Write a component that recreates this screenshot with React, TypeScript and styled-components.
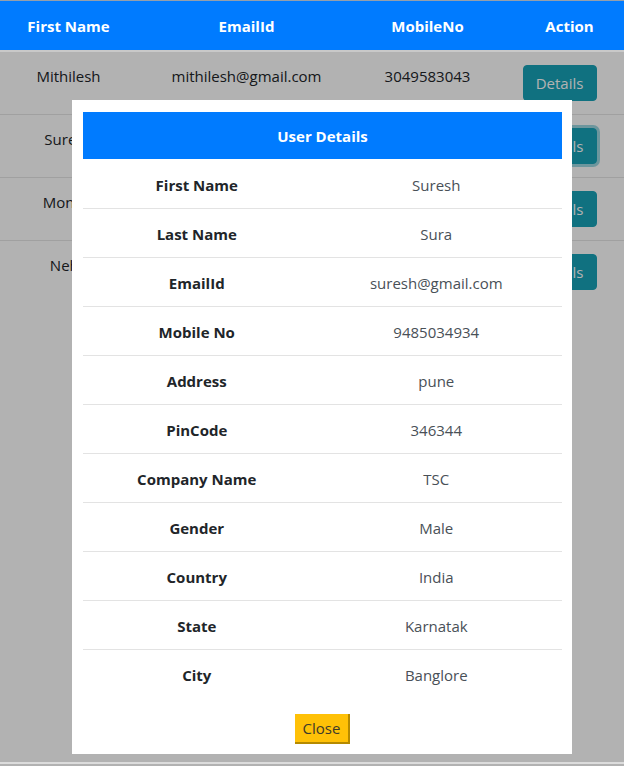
import styled, { createGlobalStyle } from "styled-components";

const users = [
  { first: "Mithilesh", email: "mithilesh@gmail.com", mobile: "3049583043" },
  { first: "Suresh", email: "suresh@gmail.com", mobile: "9485034934", focused: true },
  { first: "Monika", email: "monika@gmail.com", mobile: "8475638293" },
  { first: "Neha", email: "neha@gmail.com", mobile: "9384756473" },
];

const details: [string, string][] = [
  ["First Name", "Suresh"],
  ["Last Name", "Sura"],
  ["EmailId", "suresh@gmail.com"],
  ["Mobile No", "9485034934"],
  ["Address", "pune"],
  ["PinCode", "346344"],
  ["Company Name", "TSC"],
  ["Gender", "Male"],
  ["Country", "India"],
  ["State", "Karnatak"],
  ["City", "Banglore"],
];

const App = () => {
  return (
    <>
      <GlobalStyle />
      <Page>
        <HeadRow>
          <HeadCell>First Name</HeadCell>
          <HeadCell>EmailId</HeadCell>
          <HeadCell>MobileNo</HeadCell>
          <HeadCell $shift={16}>Action</HeadCell>
        </HeadRow>
        {users.map((u, i) => (
          <Row key={u.email} $last={i === users.length - 1}>
            <Cell>{u.first}</Cell>
            <Cell>{u.email}</Cell>
            <Cell>{u.mobile}</Cell>
            <ActionCell>
              <DetailsButton $focused={!!u.focused}>Details</DetailsButton>
            </ActionCell>
          </Row>
        ))}
        <Filler />
        <BottomRule />
      </Page>
      <Backdrop>
        <Modal>
          <ModalTitle>User Details</ModalTitle>
          {details.map(([label, value], i) => (
            <DetailRow key={label} $last={i === details.length - 1}>
              <Label>{label}</Label>
              <Value>{value}</Value>
            </DetailRow>
          ))}
          <Footer>
            <CloseButton>Close</CloseButton>
          </Footer>
        </Modal>
      </Backdrop>
    </>
  );
};

const GlobalStyle = createGlobalStyle`
  body {
    margin: 0;
    background: #fff;
    font-family: "Open Sans", "Noto Sans", sans-serif;
  }
`;

const Page = styled.div`
  display: flex;
  flex-direction: column;
  height: 766px;
  border-top: 1px solid #d6e4f5;
  box-sizing: border-box;
`;

const columns = "137px 219px 143px 125px";

const HeadRow = styled.div`
  position: relative;
  z-index: 2;
  display: grid;
  grid-template-columns: ${columns};
  height: 49px;
  align-items: center;
  background: #007bff;
  border-bottom: 2px solid #c9c9c9;
`;

const HeadCell = styled.div<{ $shift?: number }>`
  color: #fff;
  font-weight: 700;
  font-size: 15px;
  text-align: center;
  padding-left: ${(p) => p.$shift ?? 0}px;
`;

const Row = styled.div<{ $last: boolean }>`
  display: grid;
  grid-template-columns: ${columns};
  height: 62px;
  align-items: center;
  background: #fff;
  border-bottom: 1px solid ${(p) => (p.$last ? "transparent" : "#e6e6e6")};
`;

const Cell = styled.div`
  color: #212529;
  font-size: 15px;
  text-align: center;
  padding-bottom: 14px;
`;

const ActionCell = styled.div`
  display: flex;
  justify-content: center;
  padding-right: 4px;
`;

const DetailsButton = styled.button<{ $focused: boolean }>`
  font-family: inherit;
  font-size: 15px;
  color: #fff;
  background: #17a2b8;
  border: 1px solid #17a2b8;
  border-radius: 4px;
  width: 74px;
  height: 36px;
  box-shadow: ${(p) => (p.$focused ? "0 0 0 3px rgba(58,176,195,0.5)" : "none")};
`;

const Filler = styled.div`
  flex: 1;
  background: #fff;
`;

const BottomRule = styled.div`
  position: relative;
  z-index: 2;
  height: 2px;
  margin-bottom: 2px;
  background: #dcdcdc;
`;

const Backdrop = styled.div`
  position: fixed;
  inset: 0;
  z-index: 1;
  background: rgba(0, 0, 0, 0.3);
  display: flex;
  justify-content: center;
  align-items: flex-start;
  padding: 100px 0 0 20px;
`;

const Modal = styled.div`
  position: relative;
  z-index: 3;
  width: 500px;
  height: 654px;
  box-sizing: border-box;
  background: #fff;
  padding: 12px 10px 0 11px;
  display: flex;
  flex-direction: column;
`;

const ModalTitle = styled.div`
  height: 47px;
  display: flex;
  align-items: center;
  justify-content: center;
  background: #007bff;
  color: #fff;
  font-weight: 700;
  font-size: 15px;
  margin-bottom: 1px;
`;

const DetailRow = styled.div<{ $last: boolean }>`
  display: grid;
  grid-template-columns: 1fr 1fr;
  height: 49px;
  align-items: center;
  padding-top: 1px;
  border-bottom: ${(p) => (p.$last ? "none" : "1px solid #e3e3e3")};
  box-sizing: border-box;
`;

const Label = styled.div`
  font-weight: 700;
  font-size: 15px;
  color: #212529;
  text-align: center;
  padding-right: 12px;
`;

const Value = styled.div`
  font-size: 15px;
  color: #495057;
  text-align: center;
  padding-right: 12px;
`;

const Footer = styled.div`
  display: flex;
  justify-content: center;
  padding-top: 15px;
`;

const CloseButton = styled.button`
  font-family: inherit;
  font-size: 15px;
  color: #3d3a2a;
  background: #ffc107;
  border: none;
  border-right: 2px solid #b58a00;
  border-bottom: 2px solid #b58a00;
  padding: 0 5px;
  height: 30px;
  width: 55px;
`;

export default App;
